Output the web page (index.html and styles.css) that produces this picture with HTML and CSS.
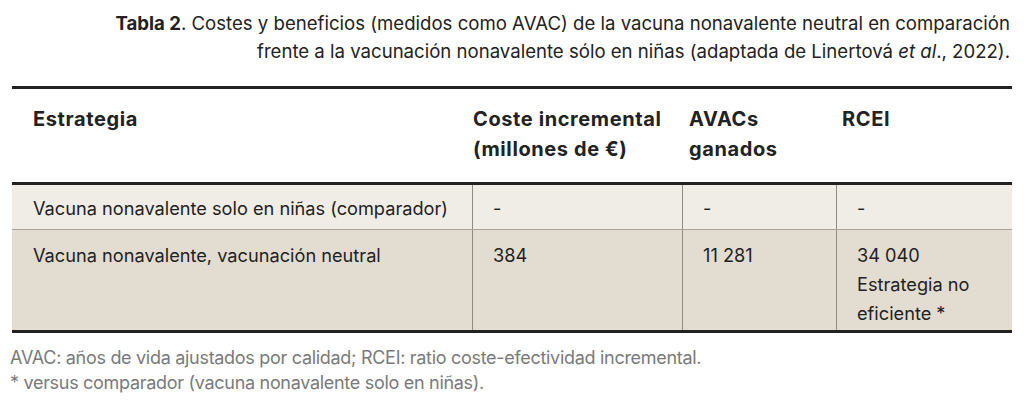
FILE: index.html
```html
<!DOCTYPE html>
<html lang="es">
<head>
<meta charset="utf-8">
<link rel="stylesheet" href="styles.css">
</head>
<body>
<div class="page">
  <p class="caption"><b>Tabla 2</b>. Costes y beneficios (medidos como AVAC) de la vacuna nonavalente neutral en comparación<br>frente a la vacunación nonavalente sólo en niñas (adaptada de Linertová <i>et al</i>., 2022).</p>
  <div class="table">
    <div class="head">
      <div class="hc">Estrategia</div>
      <div class="hc">Coste incremental<br>(millones de €)</div>
      <div class="hc">AVACs<br>ganados</div>
      <div class="hc">RCEI</div>
    </div>
    <div class="row r1">
      <div class="c">Vacuna nonavalente solo en niñas (comparador)</div>
      <div class="c">-</div>
      <div class="c">-</div>
      <div class="c">-</div>
    </div>
    <div class="row r2">
      <div class="c">Vacuna nonavalente, vacunación neutral</div>
      <div class="c">384</div>
      <div class="c">11 281</div>
      <div class="c">34 040<br>Estrategia no<br>eficiente *</div>
    </div>
  </div>
  <p class="notes">AVAC: años de vida ajustados por calidad; RCEI: ratio coste-efectividad incremental.<br>* versus comparador (vacuna nonavalente solo en niñas).</p>
</div>
</body>
</html>
```
FILE: styles.css
```css
html, body {
  margin: 0;
  padding: 0;
  background: #ffffff;
}
body {
  font-family: Inter, Roboto, "Liberation Sans", sans-serif;
  color: #222222;
  width: 1024px;
  height: 406px;
  overflow: hidden;
}
.page {
  padding-top: 9px;
}
.caption {
  margin: 0;
  padding-right: 14px;
  text-align: right;
  font-size: 18.6px;
  line-height: 28px;
  color: #222;
}
.caption b { font-weight: 700; }
.table {
  margin: 21px 0 0 12px;
  width: 1000px;
  border-top: 3px solid #222;
  border-bottom: 3px solid #222;
}
.head {
  display: grid;
  grid-template-columns: 440px 216px 153px 1fr;
  height: 96px;
  border-bottom: 3px solid #222;
  box-sizing: border-box;
  padding-top: 15px;
}
.hc {
  padding-left: 21px;
  font-weight: 700;
  font-size: 20px;
  letter-spacing: 0.6px;
  line-height: 30px;
}
.row {
  display: grid;
  grid-template-columns: 460px 210px 154px 1fr;
}
.r1 {
  background: #f0ece6;
  height: 44px;
  border-bottom: 1px solid #aaa59c;
}
.r1 .c {
  padding-top: 9px;
}
.r2 {
  background: #e3ddd1;
  height: 100px;
}
.c {
  padding: 11px 0 0 20px;
  font-size: 18.2px;
  line-height: 29px;
  border-left: 1px solid #8f8a82;
}
.c:first-child {
  border-left: none;
  padding-left: 21px;
}
.notes {
  margin: 12px 0 0 10px;
  font-size: 18px;
  letter-spacing: -0.3px;
  line-height: 25px;
  color: #7a7a7a;
}
```
